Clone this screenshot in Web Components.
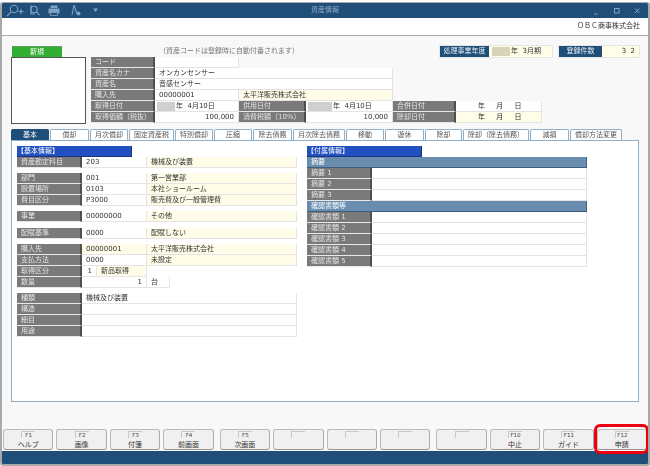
<!DOCTYPE html>
<html lang="ja"><head><meta charset="utf-8"><title>資産情報</title>
<style>
html,body{margin:0;padding:0;background:#fff;}
body{width:650px;height:466px;overflow:hidden;font:7px/1 "DejaVu Sans","Noto Sans CJK JP",sans-serif;color:#333;}
</style></head><body>
<script>
function def(name,css,html){
  customElements.define(name,class extends HTMLElement{
    constructor(){super();const r=this.attachShadow({mode:'open'});r.innerHTML='<style>'+css+'</style>'+html;}
  });
}
def('as-window',`:host{display:flex;flex-direction:column;box-sizing:border-box;margin-top:2px;width:650px;height:464px;border:solid #a9a9a9;border-width:1px 2px 2px;border-radius:3px;background:#f8f8f8;overflow:hidden;filter:blur(.3px);}`,'<slot></slot>');
def('as-titlebar',`:host{display:grid;grid-template-columns:1fr auto 1fr;align-items:center;height:15px;background:#1f4e79;color:#8fabc7;flex:none;}
.l,.r{display:flex;align-items:center;}.r{justify-content:flex-end;}
svg{display:block}`,
`<div class="l"><svg width="100" height="15" viewBox="0 0 100 15" fill="none" stroke="#7fa3c6" stroke-width="1.1">
<circle cx="12" cy="6" r="3.8"/><path d="M9.200 8.800 5 13M16.500 8.500h5M19 6v5"/>
<circle cx="32" cy="6.500" r="3.200"/><path d="M29.800 3h-.8v8h4M34.500 9l3 3"/>
<path d="M48.500 5V2.500h7V5M46.500 5.500h11v5h-11z" fill="#7fa3c6" stroke="none"/><path d="M48.500 9.500h7v3h-7z" fill="#1f4e79" stroke="#7fa3c6" stroke-width=".8"/>
<path d="M72 2 70 12M72 2l3 9"/><circle cx="76.500" cy="10.500" r="2" fill="#7fa3c6" stroke="none"/>
<path d="M91 5.500h5l-2.500 3.500z" fill="#7fa3c6" stroke="none"/></svg></div>
<div><slot></slot></div>
<div class="r"><svg width="60" height="15" viewBox="0 0 60 15" fill="none" stroke="#7fa3c6" stroke-width="1"><path d="M6 11h3.500"/><rect x="26.500" y="5.500" width="4.500" height="4.500"/><path d="M47 5.500l4.500 4.500M51.500 5.500 47 10"/></svg></div>`);
def('as-company',`:host{display:block;flex:none;height:17px;line-height:17px;background:#fff;text-align:right;padding-right:8px;border-bottom:1.500px solid #aaa;box-sizing:content-box;color:#333;}`,'<slot></slot>');
def('as-main',`:host{display:flex;flex-direction:column;flex:1;min-height:0;padding:10px 9px 0;}`,'<slot></slot>');
def('as-strip',`:host{display:flex;align-items:stretch;height:11px;flex:none;}
::slotted([slot=note]){margin-left:97px;align-self:center;color:#777;}
.sp{flex:1}.r{display:flex;gap:7px}`,`<slot name="badge"></slot><slot name="note"></slot><span class="sp"></span><div class="r"><slot></slot></div>`);
def('as-badge',`:host{display:block;box-sizing:border-box;width:50px;margin-left:1px;background:#2fae2f;color:#fff;text-align:center;line-height:11px;border-top:1px solid #6a9a6a;}`,'<slot></slot>');
def('as-info',`:host{display:flex;height:11px;box-shadow:0 0 0 1px #e6e6e6;}
.k{background:#1f4e79;color:#e6eef6;display:flex;align-items:center;justify-content:center;width:var(--lw);}
.v{background:#fffde8;display:flex;align-items:center;width:var(--vw);padding:0 3px;box-sizing:border-box;}`,
`<div class="k"><slot name="k"></slot></div><div class="v"><slot></slot></div>`);
def('as-head',`:host{display:flex;flex:none;gap:5px;}`,'<slot></slot>');
def('as-photo',`:host{display:block;box-sizing:border-box;width:75px;height:67px;background:#fff;border:1px solid #555;}`,'');
def('as-rows',`:host{display:flex;flex-direction:column;}`,'<slot></slot>');
def('as-row',`:host{display:flex;height:11px;flex:none;}`,'<slot></slot>');
def('as-cell',`:host{display:flex;align-items:center;box-sizing:border-box;height:11px;width:var(--w);flex:none;padding:0 4px;white-space:nowrap;overflow:hidden;background:#fff;border-right:1px solid #e4e4e4;border-bottom:1px solid #e4e4e4;color:#333;}
:host([k=l]){background:#7a7a7a;color:#e4e4e4;border-right:2px solid #4f4f4f;border-bottom:1px solid #e8e8e8;}
:host([k=y]){background:#fffde8;}
:host([k=h]){background:#6a8cae;color:#fff;border-right:1px solid #3f5f7f;border-bottom:1px solid #3f5f7f;}
:host([r]){justify-content:flex-end;}`,'<slot></slot>');
def('as-blur',`:host{display:inline-block;width:var(--bw,18px);height:9px;background:var(--bc,#cfcfcf);margin:0 1px 0 -2px;flex:none;}`,'');
def('as-tabs',`:host{display:flex;height:11px;flex:none;margin-top:5px;}`,'<slot></slot>');
def('as-tab',`:host{display:flex;align-items:center;justify-content:center;box-sizing:border-box;width:var(--w);margin-right:1px;background:#fff;color:#555;border:1px solid #8fb0c8;border-bottom:0;border-radius:2px 2px 0 0;white-space:nowrap;}
:host([on]){background:#1f4e79;color:#fff;border-color:#1f4e79;}`,'<slot></slot>');
def('as-panel',`:host{display:flex;gap:10px;box-sizing:border-box;height:262px;flex:none;background:#fff;border:1px solid #8fb0c8;padding:5px;}`,'<slot></slot>');
def('as-col',`:host{display:flex;flex-direction:column;width:280px;flex:none;}`,'<slot></slot>');
def('as-sec',`:host{display:block;box-sizing:border-box;width:115px;height:11px;line-height:10px;background:#2250c0;color:#fff;border-right:1px solid #17357f;border-bottom:1px solid #17357f;white-space:nowrap;flex:none;}`,'<slot></slot>');
def('as-group',`:host{display:block;margin-top:var(--mt,5px);flex:none;}`,'<slot></slot>');
def('as-footer',`:host{display:flex;flex:none;gap:6px;padding:0 1px 1px;height:22px;box-sizing:border-box;background:#f8f8f8;}`,'<slot></slot>');
def('as-keygroup',`:host{display:flex;gap:3px;flex:4 1 0;}`,'<slot></slot>');
def('as-key',`:host{display:flex;flex-direction:column;align-items:center;flex:1 1 0;position:relative;box-sizing:border-box;background:#f0f0f0;border:1px solid #bbb;border-bottom:1.500px solid #999;border-right-color:#aaa;border-radius:3px;padding-top:1px;color:#333;}
.cap{box-sizing:border-box;min-width:14px;height:7px;line-height:7px;font-size:5.500px;text-align:center;border-top:1px solid #c9c9c9;border-left:1px solid #c9c9c9;color:#444;}
.lab{margin-top:3px;line-height:8px;}
:host([mark])::after{content:"";position:absolute;top:-6px;bottom:-5px;left:-4px;right:-3px;border:3px solid #ee0010;border-radius:6px;}`,
`<div class="cap"><slot name="f"></slot></div><div class="lab"><slot></slot></div>`);
def('as-statusbar',`:host{display:block;flex:none;height:13px;background:#1f4e79;}`,'');
</script>

<as-window>
  <as-titlebar>資産情報</as-titlebar>
  <as-company>ＯＢＣ商事株式会社</as-company>
  <as-main>
    <as-strip>
      <as-badge slot="badge">新規</as-badge>
      <span slot="note">（資産コードは登録時に自動付番されます）</span>
      <as-info style="--lw:49px;--vw:63px"><span slot="k">処理事業年度</span><as-blur style="--bc:#d6d3b8;margin:0 1px 0 0"></as-blur>年&nbsp;&nbsp;3月期</as-info>
      <as-info style="--lw:43px;--vw:37px"><span slot="k">登録件数</span><span style="margin-left:auto;letter-spacing:1px">3 2</span></as-info>
    </as-strip>
    <as-head>
      <as-photo></as-photo>
      <as-rows>
        <as-row><as-cell k="l" style="--w:64px">コード</as-cell><as-cell style="--w:84px"></as-cell></as-row>
        <as-row><as-cell k="l" style="--w:64px">資産名カナ</as-cell><as-cell style="--w:238px">オンカンセンサー</as-cell></as-row>
        <as-row><as-cell k="l" style="--w:64px">資産名</as-cell><as-cell style="--w:238px">音感センサー</as-cell></as-row>
        <as-row><as-cell k="l" style="--w:64px">購入先</as-cell><as-cell style="--w:84px">00000001</as-cell><as-cell k="y" style="--w:154px">太平洋販売株式会社</as-cell></as-row>
        <as-row><as-cell k="l" style="--w:64px">取得日付</as-cell><as-cell style="--w:84px"><as-blur></as-blur>年&nbsp;&nbsp;4月10日</as-cell><as-cell k="l" style="--w:67px">供用日付</as-cell><as-cell style="--w:87px"><as-blur style="--bw:24px"></as-blur>年&nbsp;&nbsp;4月10日</as-cell><as-cell k="l" style="--w:63px">合併日付</as-cell><as-cell style="--w:86px;padding-left:22px;word-spacing:9px">年 月 日</as-cell></as-row>
        <as-row><as-cell k="l" style="--w:64px">取得価額（税抜）</as-cell><as-cell r style="--w:84px">100,000</as-cell><as-cell k="l" style="--w:67px">消費税額（10%）</as-cell><as-cell r style="--w:87px">10,000</as-cell><as-cell k="l" style="--w:63px">除却日付</as-cell><as-cell k="y" style="--w:86px;padding-left:22px;word-spacing:9px">年 月 日</as-cell></as-row>
      </as-rows>
    </as-head>
    <as-tabs>
      <as-tab on style="--w:38px">基本</as-tab><as-tab style="--w:39px">償却</as-tab><as-tab style="--w:38px">月次償却</as-tab><as-tab style="--w:45px">固定資産税</as-tab><as-tab style="--w:38px">特別償却</as-tab><as-tab style="--w:38px">圧縮</as-tab><as-tab style="--w:39px">除去債務</as-tab><as-tab style="--w:52px">月次除去債務</as-tab><as-tab style="--w:38px">移動</as-tab><as-tab style="--w:39px">遊休</as-tab><as-tab style="--w:37px">除却</as-tab><as-tab style="--w:66px">除却（除去債務）</as-tab><as-tab style="--w:39px">減損</as-tab><as-tab style="--w:52px">償却方法変更</as-tab>
    </as-tabs>
    <as-panel>
      <as-col>
        <as-sec>【基本情報】</as-sec>
        <as-row><as-cell k="l" style="--w:65px">資産勘定科目</as-cell><as-cell style="--w:65px">203</as-cell><as-cell k="y" style="--w:150px">機械及び装置</as-cell></as-row>
        <as-group>
          <as-row><as-cell k="l" style="--w:65px">部門</as-cell><as-cell style="--w:65px">001</as-cell><as-cell k="y" style="--w:150px">第一営業部</as-cell></as-row>
          <as-row><as-cell k="l" style="--w:65px">設置場所</as-cell><as-cell style="--w:65px">0103</as-cell><as-cell k="y" style="--w:150px">本社ショールーム</as-cell></as-row>
          <as-row><as-cell k="l" style="--w:65px">費目区分</as-cell><as-cell style="--w:65px">P3000</as-cell><as-cell k="y" style="--w:150px">販売費及び一般管理費</as-cell></as-row>
        </as-group>
        <as-group>
          <as-row><as-cell k="l" style="--w:65px">事業</as-cell><as-cell style="--w:65px">00000000</as-cell><as-cell k="y" style="--w:150px">その他</as-cell></as-row>
        </as-group>
        <as-group style="--mt:6px">
          <as-row><as-cell k="l" style="--w:65px">配賦基準</as-cell><as-cell style="--w:65px">0000</as-cell><as-cell k="y" style="--w:150px">配賦しない</as-cell></as-row>
        </as-group>
        <as-group>
          <as-row><as-cell k="l" style="--w:65px">購入先</as-cell><as-cell k="y" style="--w:65px">00000001</as-cell><as-cell k="y" style="--w:150px">太平洋販売株式会社</as-cell></as-row>
          <as-row><as-cell k="l" style="--w:65px">支払方法</as-cell><as-cell style="--w:65px">0000</as-cell><as-cell k="y" style="--w:150px">未設定</as-cell></as-row>
          <as-row><as-cell k="l" style="--w:65px">取得区分</as-cell><as-cell r style="--w:15px">1</as-cell><as-cell k="y" style="--w:50px">新品取得</as-cell></as-row>
          <as-row><as-cell k="l" style="--w:65px">数量</as-cell><as-cell r style="--w:65px">1</as-cell><as-cell style="--w:23px">台</as-cell></as-row>
        </as-group>
        <as-group>
          <as-row><as-cell k="l" style="--w:65px">種類</as-cell><as-cell style="--w:215px">機械及び装置</as-cell></as-row>
          <as-row><as-cell k="l" style="--w:65px">構造</as-cell><as-cell style="--w:215px"></as-cell></as-row>
          <as-row><as-cell k="l" style="--w:65px">細目</as-cell><as-cell style="--w:215px"></as-cell></as-row>
          <as-row><as-cell k="l" style="--w:65px">用途</as-cell><as-cell style="--w:215px"></as-cell></as-row>
        </as-group>
      </as-col>
      <as-col>
        <as-sec>【付属情報】</as-sec>
        <as-row><as-cell k="h" style="--w:280px">摘要</as-cell></as-row>
        <as-row><as-cell k="l" style="--w:65px">摘要 1</as-cell><as-cell style="--w:215px"></as-cell></as-row>
        <as-row><as-cell k="l" style="--w:65px">摘要 2</as-cell><as-cell style="--w:215px"></as-cell></as-row>
        <as-row><as-cell k="l" style="--w:65px">摘要 3</as-cell><as-cell style="--w:215px"></as-cell></as-row>
        <as-row><as-cell k="h" style="--w:280px">確認書類等</as-cell></as-row>
        <as-row><as-cell k="l" style="--w:65px">確認書類 1</as-cell><as-cell style="--w:215px"></as-cell></as-row>
        <as-row><as-cell k="l" style="--w:65px">確認書類 2</as-cell><as-cell style="--w:215px"></as-cell></as-row>
        <as-row><as-cell k="l" style="--w:65px">確認書類 3</as-cell><as-cell style="--w:215px"></as-cell></as-row>
        <as-row><as-cell k="l" style="--w:65px">確認書類 4</as-cell><as-cell style="--w:215px"></as-cell></as-row>
        <as-row><as-cell k="l" style="--w:65px">確認書類 5</as-cell><as-cell style="--w:215px"></as-cell></as-row>
      </as-col>
    </as-panel>
  </as-main>
  <as-footer>
    <as-keygroup>
      <as-key><span slot="f">F1</span>ヘルプ</as-key>
      <as-key><span slot="f">F2</span>画像</as-key>
      <as-key><span slot="f">F3</span>付箋</as-key>
      <as-key><span slot="f">F4</span>前画面</as-key>
    </as-keygroup>
    <as-keygroup>
      <as-key><span slot="f">F5</span>次画面</as-key>
      <as-key></as-key>
      <as-key></as-key>
      <as-key></as-key>
    </as-keygroup>
    <as-keygroup>
      <as-key></as-key>
      <as-key><span slot="f">F10</span>中止</as-key>
      <as-key><span slot="f">F11</span>ガイド</as-key>
      <as-key mark><span slot="f">F12</span>申請</as-key>
    </as-keygroup>
  </as-footer>
  <as-statusbar></as-statusbar>
</as-window>
</body></html>
